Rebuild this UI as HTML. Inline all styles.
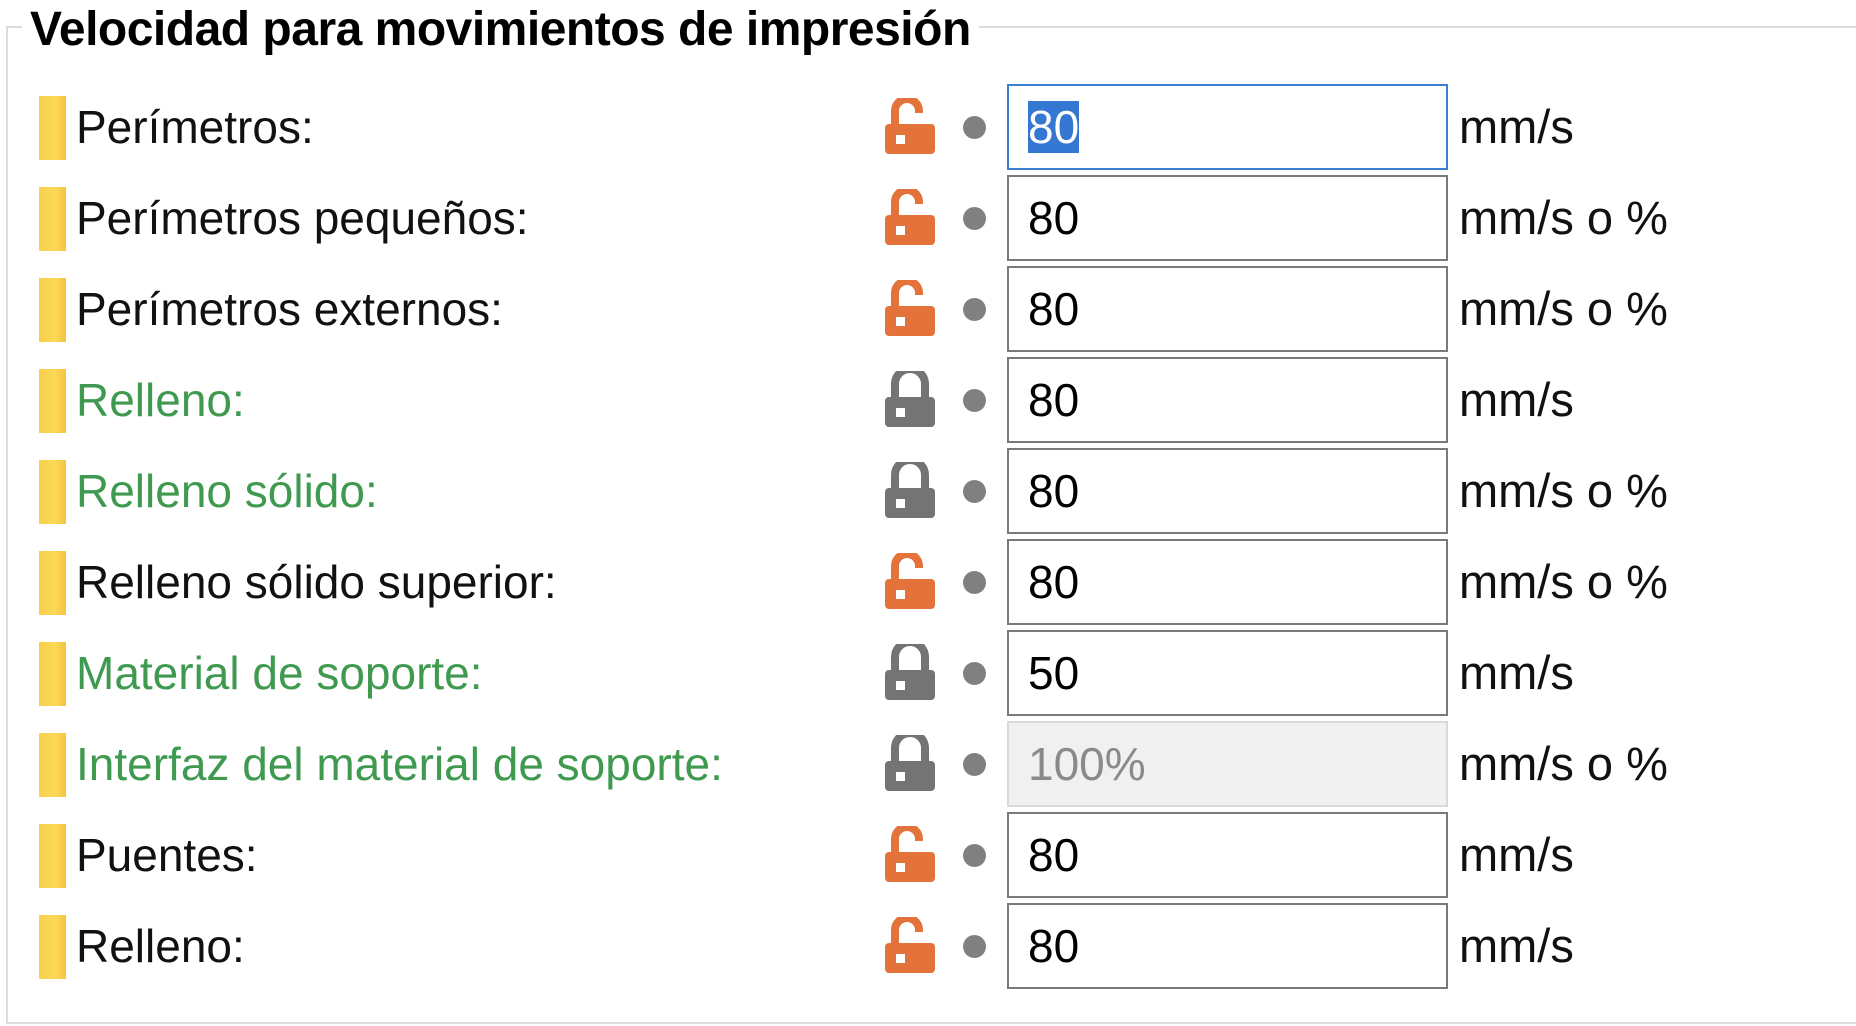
<!DOCTYPE html>
<html><head><meta charset="utf-8"><style>
body{margin:0;width:1856px;height:1026px;background:#fff;overflow:hidden;font-family:"Segoe UI","Liberation Sans",sans-serif;position:relative}
.frame{position:absolute;left:6px;top:26px;width:1860px;height:994px;border:2px solid #dcdcdc;border-right:none}
.title{position:absolute;left:22px;top:0;padding:0 8px 0 8px;background:#fff;font-weight:bold;font-size:48px;line-height:60px;color:#000;letter-spacing:-0.5px}
.row{position:absolute;left:0;height:91px;width:1856px}
.bar{position:absolute;left:39px;top:0;width:27px;height:64px;background:linear-gradient(90deg,#f8d04a,#fbd85a 60%,#f3c43a)}
.lbl{position:absolute;left:76px;top:-4px;font-size:46px;line-height:70px;color:#111;white-space:nowrap}
.g{color:#3f9a50}
.lock{position:absolute;left:885px;top:2px}
.dot{position:absolute;left:963px;top:20px;width:23px;height:23px;border-radius:50%;background:#808080}
.box{position:absolute;left:1007px;top:-12px;width:418px;height:82px;border:2px solid #7a7a7a;font-size:46px;line-height:82px;padding-left:19px;box-sizing:content-box;background:#fff;color:#000}
.unit{position:absolute;left:1459px;top:-4px;font-size:47px;line-height:70px;color:#111;white-space:nowrap}
</style></head><body>
<div class="frame"></div>
<div class="title">Velocidad para movimientos de impresión</div>

<svg width="0" height="0" style="position:absolute">
<defs>
<symbol id="un" viewBox="0 0 50 56"><path d="M10 26 V13 a12 12 0 0 1 24 0 v2" fill="none" stroke="currentColor" stroke-width="8"/><rect x="0" y="26" width="50" height="30" rx="4" fill="currentColor"/><rect x="11" y="37" width="9" height="9" fill="#fff"/></symbol>
<symbol id="lk" viewBox="0 0 50 56"><path d="M10 26 V13 a12 12 0 0 1 30 0 V26" fill="none" stroke="currentColor" stroke-width="8"/><rect x="0" y="26" width="50" height="30" rx="4" fill="currentColor"/><rect x="11" y="37" width="9" height="9" fill="#fff"/></symbol>
</defs></svg>

<div class="row" style="top:96px"><div class="bar"></div><div class="lbl">Perímetros:</div><svg class="lock" width="50" height="56" style="color:#e3733a"><use href="#un"/></svg><div class="dot"></div><div class="box" style="border-color:#3c7fd0"><span style="background:#3478d4;color:#fff">80</span></div><div class="unit">mm/s</div></div>
<div class="row" style="top:187px"><div class="bar"></div><div class="lbl">Perímetros pequeños:</div><svg class="lock" width="50" height="56" style="color:#e3733a"><use href="#un"/></svg><div class="dot"></div><div class="box">80</div><div class="unit">mm/s o %</div></div>
<div class="row" style="top:278px"><div class="bar"></div><div class="lbl">Perímetros externos:</div><svg class="lock" width="50" height="56" style="color:#e3733a"><use href="#un"/></svg><div class="dot"></div><div class="box">80</div><div class="unit">mm/s o %</div></div>
<div class="row" style="top:369px"><div class="bar"></div><div class="lbl g">Relleno:</div><svg class="lock" width="50" height="56" style="color:#747474"><use href="#lk"/></svg><div class="dot"></div><div class="box">80</div><div class="unit">mm/s</div></div>
<div class="row" style="top:460px"><div class="bar"></div><div class="lbl g">Relleno sólido:</div><svg class="lock" width="50" height="56" style="color:#747474"><use href="#lk"/></svg><div class="dot"></div><div class="box">80</div><div class="unit">mm/s o %</div></div>
<div class="row" style="top:551px"><div class="bar"></div><div class="lbl">Relleno sólido superior:</div><svg class="lock" width="50" height="56" style="color:#e3733a"><use href="#un"/></svg><div class="dot"></div><div class="box">80</div><div class="unit">mm/s o %</div></div>
<div class="row" style="top:642px"><div class="bar"></div><div class="lbl g">Material de soporte:</div><svg class="lock" width="50" height="56" style="color:#747474"><use href="#lk"/></svg><div class="dot"></div><div class="box">50</div><div class="unit">mm/s</div></div>
<div class="row" style="top:733px"><div class="bar"></div><div class="lbl g">Interfaz del material de soporte:</div><svg class="lock" width="50" height="56" style="color:#747474"><use href="#lk"/></svg><div class="dot"></div><div class="box" style="background:#f0f0f0;border-color:#d8d8d8;color:#8a8a8a">100%</div><div class="unit">mm/s o %</div></div>
<div class="row" style="top:824px"><div class="bar"></div><div class="lbl">Puentes:</div><svg class="lock" width="50" height="56" style="color:#e3733a"><use href="#un"/></svg><div class="dot"></div><div class="box">80</div><div class="unit">mm/s</div></div>
<div class="row" style="top:915px"><div class="bar"></div><div class="lbl">Relleno:</div><svg class="lock" width="50" height="56" style="color:#e3733a"><use href="#un"/></svg><div class="dot"></div><div class="box">80</div><div class="unit">mm/s</div></div>
</body></html>
